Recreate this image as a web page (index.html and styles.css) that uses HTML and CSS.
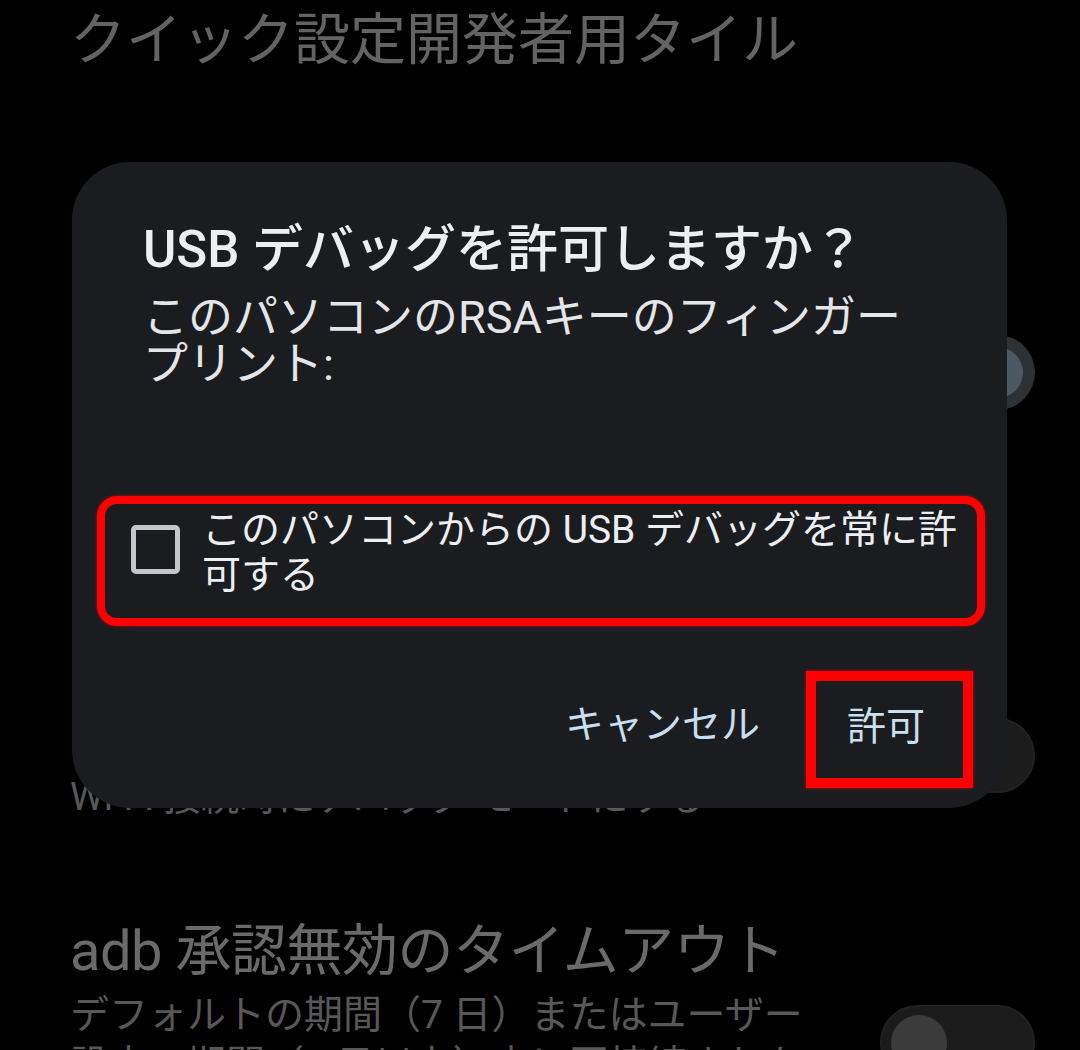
FILE: index.html
```html
<!DOCTYPE html>
<html lang="ja">
<head>
<meta charset="utf-8">
<title>USB デバッグ</title>
<link rel="stylesheet" href="styles.css">
</head>
<body>
<div class="page">
  <h1 class="page-title">クイック設定開発者用タイル</h1>

  <div class="item item-a">
    <div class="item-text">
      <div class="item-title">デバッグ</div>
    </div>
  </div>

  <div class="item item-b">
    <div class="item-text">
      <div class="item-title">USB デバッグ</div>
      <div class="item-desc">USB 接続時はデバッグモードにする</div>
    </div>
    <div class="toggle toggle-on"><span class="thumb"></span></div>
  </div>

  <div class="item item-d">
    <div class="item-text">
      <div class="item-title">ワイヤレス デバッグ</div>
      <div class="item-desc">Wi-Fi 接続時にデバッグ モードにする</div>
    </div>
    <div class="toggle toggle-off toggle-d"><span class="thumb"></span></div>
  </div>

  <div class="item item-e">
    <div class="item-text">
      <div class="item-title big">adb 承認無効のタイムアウト</div>
      <div class="item-desc">デフォルトの期間（7 日）またはユーザー<br>設定の期間（1 日以上）内に再接続されな<br>かった場合に、adb 承認の自動取り消しを無効にします。</div>
    </div>
    <div class="toggle toggle-off toggle-e"><span class="thumb"></span></div>
  </div>
</div>

<div class="dialog" role="dialog">
  <div class="dlg-title">USB デバッグを許可しますか？</div>
  <div class="dlg-body">このパソコンのRSAキーのフィンガー<br>プリント:</div>
  <label class="always-row">
    <span class="checkbox"></span>
    <span class="always-text">このパソコンからの USB デバッグを常に許<br>可する</span>
  </label>
  <div class="dlg-buttons">
    <span class="btn btn-cancel">キャンセル</span>
    <span class="btn btn-allow">許可</span>
  </div>
</div>
</body>
</html>
```

FILE: styles.css
```css
html, body {
  margin: 0;
  padding: 0;
  background: #000;
}
body {
  width: 1080px;
  height: 1050px;
  overflow: hidden;
  position: relative;
  font-family: Roboto, "Noto Sans CJK JP", sans-serif;
}

.page {
  padding: 4px 45px 0 70px;
  color: #5e5e5e;
}
.page-title {
  margin: 0;
  font-size: 56px;
  line-height: 72px;
  font-weight: 400;
  color: #636363;
}

.item {
  display: flex;
  align-items: flex-start;
}
.item-text {
  flex: 1;
  min-width: 0;
}
.item-title {
  font-size: 44px;
  line-height: 56px;
  color: #666;
  white-space: nowrap;
}
.item-title.big {
  font-size: 56px;
  line-height: 68px;
  color: #6a6a6a;
  letter-spacing: -0.5px;
}
.item-desc {
  font-size: 38px;
  line-height: 48px;
  color: #585858;
  white-space: nowrap;
}

.item-a {
  margin-top: 114px;
}
.item-a .item-title {
  font-size: 40px;
  line-height: 50px;
}
.item-b {
  margin-top: 87px;
}
.item-d {
  margin-top: 286px;
}
.item-e {
  margin-top: 96px;
}
.item-e .item-desc {
  margin-top: 5px;
  font-size: 39px;
  line-height: 50px;
}

.toggle {
  flex: 0 0 auto;
  width: 155px;
  height: 75px;
  border-radius: 38px;
  box-sizing: border-box;
  position: relative;
  display: flex;
  align-items: center;
}
.toggle-on {
  background: #2b3135;
  justify-content: flex-end;
  padding-right: 12px;
  margin-top: 8px;
}
.toggle-on .thumb {
  width: 51px;
  height: 51px;
  border-radius: 50%;
  background: #4d5962;
}
.toggle-off {
  background: #1b1b1c;
  border: 2px solid #222223;
  justify-content: flex-start;
  padding-left: 9px;
}
.toggle-off .thumb {
  width: 56px;
  height: 56px;
  border-radius: 50%;
  background: #3a3b3a;
}
.toggle-d {
  margin-top: 1px;
  background: #1c1c1d;
}
.toggle-e {
  margin-top: 88px;
}

/* dialog overlay */
.dialog {
  position: absolute;
  left: 72px;
  top: 162px;
  width: 935px;
  box-sizing: border-box;
  padding: 58px 22px 20px 25px;
  background: #1b1c20;
  border-radius: 58px;
  color: #e8e9ed;
}
.dlg-title {
  padding-left: 46px;
  font-size: 51px;
  line-height: 60px;
  font-weight: 500;
  color: #eceef2;
  white-space: nowrap;
}
.dlg-body {
  padding-left: 46px;
  margin-top: 14px;
  font-size: 45px;
  line-height: 47px;
  color: #e4e5e9;
  white-space: nowrap;
}

.always-row {
  display: flex;
  align-items: flex-start;
  margin-top: 108px;
  height: 130px;
  box-sizing: border-box;
  border: 8px solid #ff0000;
  border-radius: 20px;
  box-shadow: 0 0 3px rgba(255, 0, 0, 0.7);
  padding: 4px 10px 0 26px;
}
.checkbox {
  flex: 0 0 auto;
  width: 49px;
  height: 49px;
  box-sizing: border-box;
  border: 5px solid #c3c7cc;
  border-radius: 5px;
  margin-top: 17px;
  margin-right: 22px;
}
.always-text {
  font-size: 39px;
  line-height: 45px;
  color: #eceff2;
  white-space: nowrap;
}

.dlg-buttons {
  display: flex;
  justify-content: flex-end;
  align-items: center;
  margin-top: 45px;
  margin-right: 12px;
}
.btn {
  font-size: 39px;
  line-height: 50px;
  color: #c6deef;
}
.btn-cancel {
  margin-right: 46px;
  padding-bottom: 10px;
}
.btn-allow {
  width: 167px;
  height: 117px;
  box-sizing: border-box;
  border: 10px solid #ff0000;
  box-shadow: 0 0 3px rgba(255, 0, 0, 0.7);
  padding: 21px 0 0 31px;
  color: #c9e0f0;
}
```
